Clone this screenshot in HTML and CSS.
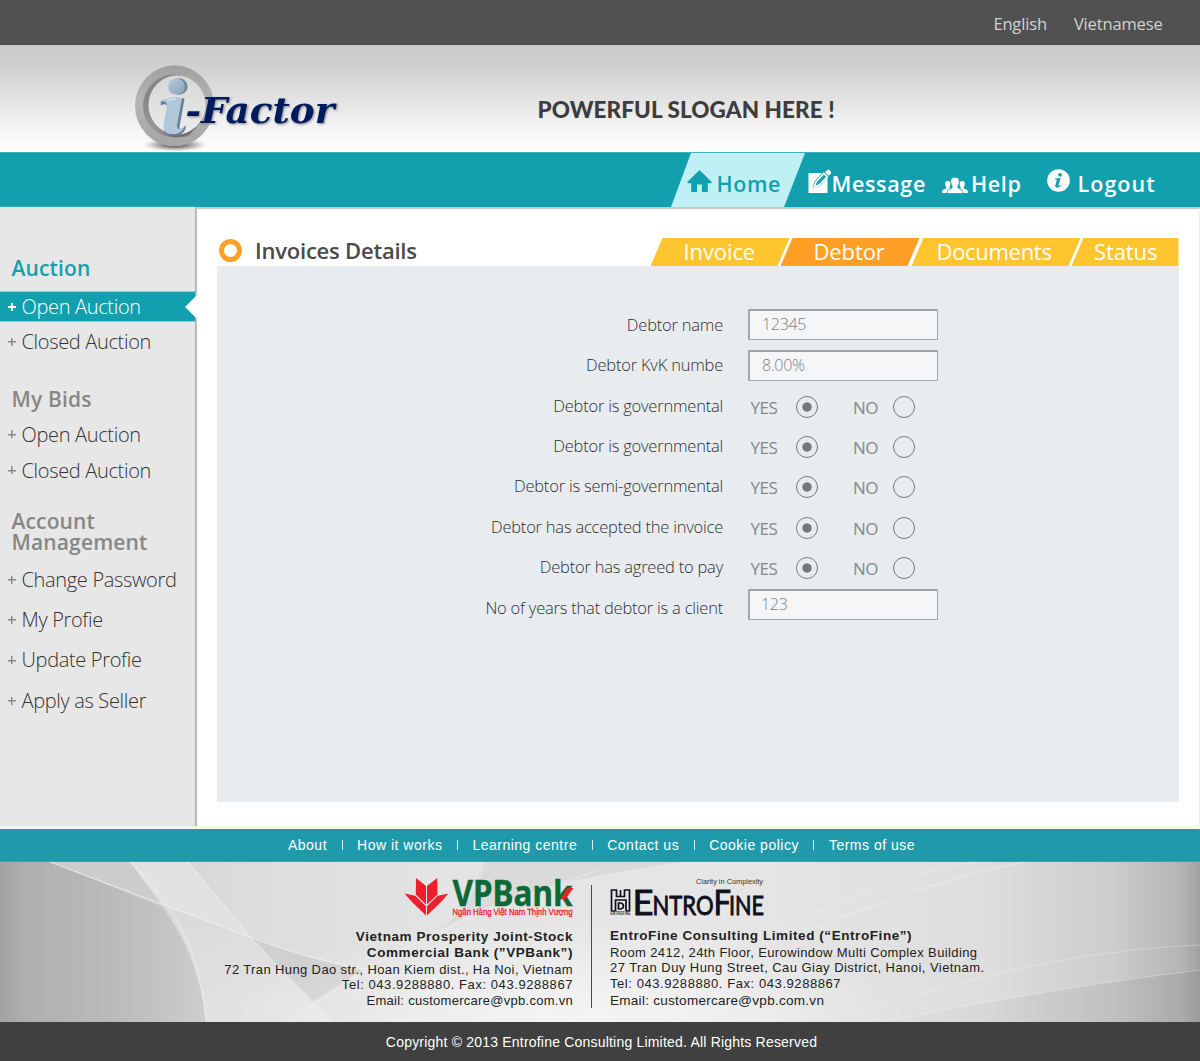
FILE: index.html
```
<!DOCTYPE html>
<html lang="en">
<head>
<meta charset="utf-8">
<title>i-Factor – Invoices Details</title>
<link rel="stylesheet" href="styles.css">
</head>
<body>
<div class="page">
  <div class="topbar">
    <a>English</a>
    <a>Vietnamese</a>
  </div>

  <header class="masthead">
    <svg class="logo" width="215" height="92" viewBox="130 60 215 92" role="img" aria-label="i-Factor">
      <defs>
        <linearGradient id="ring" x1="0" y1="0" x2="0" y2="1">
          <stop offset="0" stop-color="#a0a0a0"/><stop offset=".45" stop-color="#b4b4b4"/><stop offset="1" stop-color="#a6a6a6"/>
        </linearGradient>
        <linearGradient id="inner" x1="0" y1="0" x2="1" y2="1">
          <stop offset="0" stop-color="#7c7c7c"/><stop offset=".5" stop-color="#989898"/><stop offset="1" stop-color="#6f6f6f"/>
        </linearGradient>
        <linearGradient id="hole" x1="0" y1="0" x2="0" y2="1">
          <stop offset="0" stop-color="#d6d6d6"/><stop offset="1" stop-color="#ececec"/>
        </linearGradient>
        <linearGradient id="ball" x1="0" y1="0" x2="1" y2="1">
          <stop offset="0" stop-color="#b9cbdf"/><stop offset="1" stop-color="#8aa0b8"/>
        </linearGradient>
        <radialGradient id="ground"><stop offset="0" stop-color="#222"/><stop offset=".55" stop-color="#777" stop-opacity=".6"/><stop offset="1" stop-color="#999" stop-opacity="0"/></radialGradient>
      </defs>
      <ellipse cx="175" cy="145" rx="32" ry="6.500" fill="url(#ground)"/>
      <ellipse cx="174.500" cy="105.800" rx="39.500" ry="40.500" fill="url(#ring)"/>
      <ellipse cx="174" cy="106" rx="31" ry="31.500" fill="url(#inner)"/>
      <ellipse cx="177" cy="105" rx="28.500" ry="29.500" fill="url(#hole)"/>
      <path d="M158 130c10 8 28 7 37-3l-5 8c-8 4-20 3-30-4z" fill="#555" opacity=".5"/>
      <ellipse cx="179" cy="86.500" rx="8.600" ry="8.300" fill="#71869c"/>
      <ellipse cx="176.500" cy="86.500" rx="8.400" ry="8" fill="url(#ball)"/>
      <path d="M161 101.500c6-4 16-4.500 23.500-3l-5 28c0 4 3 3 6.500-1.500 0 7-5 11-13 10.500-9-.5-10-5-8.500-12l3-16c0-4-4-4-7-2z" fill="#697f97"/>
      <path d="M158.500 102c5-4 16-5.500 23.500-4l-5 27.500c-.5 4.500 4 4 7.500.5-1.500 5-5 8.500-12.500 8-8-.5-9.500-5-8-12l3-16c0-4.500-3.500-5.500-8.500-4z" fill="#b3c7da"/>
      <path d="M167 100.500c3-1 6-1.500 9-1.500" fill="none" stroke="#d3e0ec" stroke-width="1.500"/>
      <text class="logo-name" x="185.500" y="122.700" textLength="149" lengthAdjust="spacingAndGlyphs">-Factor</text>
    </svg>
    <p class="slogan">POWERFUL SLOGAN HERE !</p>
  </header>

  <nav class="mainnav">
    <a class="nav-home">
      <svg width="25" height="22" viewBox="0 0 25 22"><path d="M12.500 0 25 12.200 23.800 13.300H20.800V22H15V14.500H10V22H4.200V13.300H1.200L0 12.200z" fill="#12a0af"/></svg>
      <span>Home</span>
    </a>
    <a class="nav-message">
      <svg width="24" height="24" viewBox="0 0 24 24"><path d="M.5 4H14L6.500 12.500 4.500 19.500 12 16.800 19.500 8.800V24H.5z" fill="#fff"/><path d="M15.800 4.400 19.300 7.900 11 16 6.300 18 8 13z" fill="none" stroke="#fff" stroke-width="1.600"/><path d="M17 3.200 19.300 1q1-.8 2 .1l1.500 1.500q.9 1 0 2L20.600 6.800z" fill="#fff"/></svg>
      <span>Message</span>
    </a>
    <a class="nav-help">
      <svg width="26" height="17" viewBox="0 0 26 17" fill="#fff"><path d="M5.800 4c2.200 0 3 1.700 2.600 3.800-.3 1.500-.9 2-1 2.900 0 .8.8 1 1.700 1.400-2 .9-2.700 2-2.900 3.900H0c0-3 .8-3.300 3-4 1-.3 1.400-.6 1.300-1.400-.1-.8-.8-1.400-1-2.800C2.900 5.600 3.700 4 5.800 4z"/><path d="M20.200 4c-2.200 0-3 1.700-2.600 3.800.3 1.500.9 2 1 2.900 0 .8-.8 1-1.700 1.400 2 .9 2.700 2 2.900 3.900H26c0-3-.8-3.300-3-4-1-.3-1.400-.6-1.300-1.400.1-.8.8-1.400 1-2.800.4-2.200-.4-3.800-2.500-3.800z"/><path d="M13 .2c3.400 0 4.700 2.200 4.200 5.300-.2 1.800-1.300 2.900-1.400 4.200-.1 1.200.6 1.600 1.800 2 2.400.9 3.200 1.300 3.200 4.800H5.200c0-3.500.8-3.900 3.200-4.800 1.200-.4 1.900-.8 1.800-2-.1-1.300-1.200-2.400-1.400-4.200-.5-3.100.8-5.300 4.200-5.300z" stroke="#12a0af" stroke-width=".8"/></svg>
      <span>Help</span>
    </a>
    <a class="nav-logout">
      <svg width="23" height="23" viewBox="0 0 23 23"><circle cx="11.500" cy="11.500" r="11.300" fill="#fff"/><circle cx="13" cy="5.800" r="1.900" fill="#12a0af"/><path d="M8 9.600 13.600 9l-2 7.200c-.2 1 .7.800 2.200-.5l.4.500c-1.500 1.800-3 2.600-4.500 2.400-1.400-.2-1.700-1.200-1.300-2.600l1.400-4.700c.2-.8-.5-.9-1.800-.9z" fill="#12a0af"/></svg>
      <span>Logout</span>
    </a>
  </nav>

  <div class="columns">
    <aside class="sidebar">
      <h2 class="current">Auction</h2>
      <a class="active">Open Auction</a>
      <a>Closed Auction</a>
      <h2 class="bids">My Bids</h2>
      <a class="short">Open Auction</a>
      <a class="short">Closed Auction</a>
      <h2 class="account">Account<br>Management</h2>
      <a>Change Password</a>
      <a>My Profie</a>
      <a>Update Profie</a>
      <a>Apply as Seller</a>
    </aside>

    <main class="content">
      <div class="heading">
        <i class="bullet"></i>
        <h1>Invoices Details</h1>
        <div class="tabs">
          <a class="tab t1">Invoice</a>
          <a class="tab t2">Debtor</a>
          <a class="tab t3">Documents</a>
          <a class="tab t4">Status</a>
        </div>
      </div>
      <form class="panel">
        <div class="row"><label>Debtor name</label><div class="field"><span class="value">12345</span></div></div>
        <div class="row"><label>Debtor KvK numbe</label><div class="field"><span class="value">8.00%</span></div></div>
        <div class="row"><label>Debtor is governmental</label><div class="opts"><span>YES</span><i class="radio on"></i><span>NO</span><i class="radio"></i></div></div>
        <div class="row"><label>Debtor is governmental</label><div class="opts"><span>YES</span><i class="radio on"></i><span>NO</span><i class="radio"></i></div></div>
        <div class="row"><label>Debtor is semi-governmental</label><div class="opts"><span>YES</span><i class="radio on"></i><span>NO</span><i class="radio"></i></div></div>
        <div class="row"><label>Debtor has accepted the invoice</label><div class="opts"><span>YES</span><i class="radio on"></i><span>NO</span><i class="radio"></i></div></div>
        <div class="row"><label>Debtor has agreed to pay</label><div class="opts"><span>YES</span><i class="radio on"></i><span>NO</span><i class="radio"></i></div></div>
        <div class="row last"><label>No of years that debtor is a client</label><div class="field"><span class="value">123</span></div></div>
      </form>
    </main>
  </div>

  <nav class="footnav">
    <a>About</a><i></i><a>How it works</a><i></i><a>Learning centre</a><i></i><a>Contact us</a><i></i><a>Cookie policy</a><i></i><a>Terms of use</a>
  </nav>

  <footer class="partners">
    <svg class="backdrop" width="1200" height="160" viewBox="0 0 1200 160">
      <defs>
        <linearGradient id="bg" x1="0" y1="0" x2="1" y2="0">
          <stop offset="0" stop-color="#c4c4c4"/><stop offset=".2" stop-color="#dcdcdc"/><stop offset=".35" stop-color="#e3e3e3"/><stop offset=".6" stop-color="#e6e6e6"/><stop offset=".82" stop-color="#dedede"/><stop offset=".93" stop-color="#cccccc"/><stop offset=".985" stop-color="#b4b4b4"/><stop offset="1" stop-color="#a0a0a0"/>
        </linearGradient>
        <linearGradient id="dk" x1="0" y1="0" x2="1" y2="0"><stop offset="0" stop-color="#a2a2a2"/><stop offset=".12" stop-color="#afafaf"/><stop offset=".6" stop-color="#bcbcbc"/><stop offset="1" stop-color="#cdcdcd"/></linearGradient>
        <radialGradient id="lift" cx=".5" cy="1" r=".5" gradientTransform="translate(0 -.3) scale(1 1.300)"><stop offset="0" stop-color="#fff" stop-opacity=".6"/><stop offset=".4" stop-color="#fff" stop-opacity=".4"/><stop offset="1" stop-color="#fff" stop-opacity="0"/></radialGradient>
        <linearGradient id="side" x1="0" y1="0" x2="1" y2="0"><stop offset="0" stop-color="#8a8a8a" stop-opacity="0"/><stop offset="1" stop-color="#8a8a8a" stop-opacity=".25"/></linearGradient>
        <linearGradient id="mid" x1="0" y1="0" x2="1" y2="1"><stop offset="0" stop-color="#d2d2d2"/><stop offset="1" stop-color="#e6e6e6"/></linearGradient>
      </defs>
      <rect width="1200" height="160" fill="url(#bg)"/>
      <path d="M0 0H50L162 44Q200 95 206 160H0z" fill="url(#dk)"/>
      <path d="M50 0 250 75 332 160H206Q200 95 162 44z" fill="url(#mid)"/>
      <path d="M50 0H130L162 43z" fill="#cccccc"/>
      <path d="M130 0H188L250 75 162 43z" fill="#e2e2e2"/>
      <path d="M250 75Q310 98 362 108L312 140z" fill="#d0d0d0"/>
      <path d="M485 0H680Q500 25 430 75 475 45 485 0z" fill="#dadada"/>
      <rect x="230" width="680" height="160" fill="url(#lift)"/>
      <path d="M880 160Q1040 128 1200 108V160z" fill="url(#side)"/>
      <g fill="none" stroke="#f4f4f4" stroke-width="1.200">
        <path d="M50 0 250 75Q310 98 375 109" opacity=".6"/><path d="M130 0Q200 65 206 160M188 0 250 75 333 160" opacity=".5"/>
        <path d="M290 160 350 118Q440 60 600 8" opacity=".5"/><path d="M404 160Q430 115 480 95" opacity=".5"/>
        <path d="M780 68Q880 15 975 0M815 66Q940 15 1025 0" opacity=".45"/>
        <path d="M870 148Q1040 90 1200 83" opacity=".35"/><path d="M890 158Q1040 128 1200 108" opacity=".35"/>
      </g>
    </svg>

    <section class="partner vpbank">
      <svg class="brand" width="175" height="42" viewBox="400 875 175 42" role="img" aria-label="VPBank">
        <g fill="#ec1f2b">
          <path d="M416 878 426 886V904.500L415.800 894.500z"/><path d="M437.300 878 427 886V904.500L437.500 894.500z"/>
          <path d="M404.500 893.500 415.300 895.800 426 906.200V915.500L412.500 902.500z"/><path d="M448.500 893.500 437.800 895.800 427 906.200V915.500L440.500 902.500z"/>
        </g>
        <text class="vp" x="452.500" y="905.500" textLength="120" lengthAdjust="spacingAndGlyphs">VPBank</text>
        <path d="M560.500 898.500 567.500 888H573.500L564.500 900.500z" fill="#ec1f2b"/>
        <text class="vp-sub" x="452.500" y="915" textLength="120" lengthAdjust="spacingAndGlyphs">Ngân Hàng Việt Nam Thịnh Vượng</text>
      </svg>
      <p class="name">Vietnam Prosperity Joint-Stock<br>Commercial Bank (”VPBank”)</p>
      <p>72 Tran Hung Dao str., Hoan Kiem dist., Ha Noi, Vietnam</p>
      <p class="tel">Tel: 043.9288880. Fax: 043.9288867</p>
      <p class="mail">Email: customercare@vpb.com.vn</p>
    </section>
    <i class="divider"></i>
    <section class="partner entrofine">
      <svg class="brand" width="156" height="42" viewBox="609 875 156 42" role="img" aria-label="EntroFine">
        <text class="motto" x="696" y="884.300" textLength="67" lengthAdjust="spacingAndGlyphs">Clarity in Complexity</text>
        <g fill="none" stroke="#10101c" stroke-width="1.700">
          <path d="M611.500 911V890H616.500V896.500H624.500V890H629.500V911M615.500 911V900H626V911M620.500 890V896M611.500 911H615.500M626 911H629.500"/>
          <path d="M618.500 903V909H620.500Q623.500 908.500 623.500 906T620.500 903z"/>
        </g>
        <text class="micro" x="610.500" y="915" textLength="20" lengthAdjust="spacingAndGlyphs">ENTROFINE</text>
        <g class="ef">
          <text class="big" x="632.500" y="914.500" textLength="21" lengthAdjust="spacingAndGlyphs">E</text>
          <text x="652.500" y="914.500" textLength="61" lengthAdjust="spacingAndGlyphs">NTRO</text>
          <text class="big" x="713.500" y="914.500" textLength="17.500" lengthAdjust="spacingAndGlyphs">F</text>
          <text x="729" y="914.500" textLength="35" lengthAdjust="spacingAndGlyphs">INE</text>
        </g>
      </svg>
      <p class="name">EntroFine Consulting Limited (“EntroFine”)</p>
      <p>Room 2412, 24th Floor, Eurowindow Multi Complex Building</p>
      <p class="street">27 Tran Duy Hung Street, Cau Giay District, Hanoi, Vietnam.</p>
      <p class="tel">Tel: 043.9288880. Fax: 043.9288867</p>
      <p class="mail">Email: customercare@vpb.com.vn</p>
    </section>
  </footer>

  <div class="copyright">Copyright © 2013 Entrofine Consulting Limited. All Rights Reserved</div>
</div>
</body>
</html>
```

FILE: styles.css
```
* { box-sizing: border-box; }
body, h1, h2, p { margin: 0; }
body { background: #fff; font-family: "Open Sans", "Noto Sans", sans-serif; }
svg { display: block; flex: none; overflow: visible; }
.page { width: 1200px; height: 1061px; display: flex; flex-direction: column; overflow: hidden; }

/* top language bar */
.topbar { height: 45px; background: linear-gradient(#515151 95%, #4a4a4a); display: flex; justify-content: flex-end; gap: 27px; padding-right: 37.500px; }
.topbar a { font-size: 16.500px; line-height: 47px; color: #d2d2d2; letter-spacing: -.15px; }

/* masthead */
.masthead { height: 107px; background: linear-gradient(#cbcbcb 8%, #d4d4d4 28%, #ececec 65%, #fdfdfd 96%); display: flex; padding-left: 130px; }
.logo { margin-top: 15px; }
.logo-name { font: italic 700 34.500px "DejaVu Serif", serif; fill: #001c5e; filter: drop-shadow(1px 1.500px 1px #85858f); }
.slogan { margin-left: 192.500px; font: 900 22.500px/129px Lato, sans-serif; color: #3d3d3d; letter-spacing: .08px; white-space: nowrap; }

/* main navigation */
.mainnav { height: 55px; flex: none; background: #12a0af; border-top: 1px solid #3cb1bd; display: flex; padding-left: 671px; }
.mainnav a { display: flex; color: #fff; font-size: 21.500px; font-weight: 600; line-height: 61px; letter-spacing: .65px; }
.nav-home { width: 134px; background: #bff1f4; clip-path: polygon(20px 0, 100% 0, 113px 100%, 0 100%); padding-left: 16px; }
.mainnav .nav-home { color: #12a0af; letter-spacing: .6px; }
.nav-home svg { margin: 17px 4.500px 0 0; }
.nav-message { width: 137px; padding-left: 2.500px; }
.nav-message svg { margin-top: 16px; }
.nav-help { width: 105px; }
.nav-help svg { margin: 24px 3px 0 0; }
.nav-logout svg { margin: 16px 7.500px 0 0; }
.mainnav .nav-logout { letter-spacing: 1.050px; }

/* two columns */
.columns { height: 622px; display: flex; background: #fff; border-bottom: 3px solid #f5f7f1; }
.sidebar { width: 196px; background: #e7e7e7; border-right: 1px solid #adadad; padding-top: 45px; box-shadow: 1px 0 1px #c9c9c9; z-index: 1; }
.sidebar h2 { font-size: 21px; line-height: 32px; font-weight: 600; color: #878787; padding-left: 11.500px; letter-spacing: .14px; }
.sidebar .current { color: #12a0af; margin-bottom: 7px; }
.sidebar .bids { margin-top: 21px; margin-bottom: 2px; }
.sidebar .account { margin-top: 21.500px; line-height: 21px; margin-bottom: 7px; }
.sidebar a { display: flex; height: 40.300px; line-height: 40px; padding-left: 8px; font-size: 20px; font-weight: 300; color: #333; letter-spacing: -.33px; white-space: nowrap; }
.sidebar a::before { content: ""; width: 8px; height: 8px; margin: 16px 5.500px 0 0; background: linear-gradient(#8a8a8a, #8a8a8a) 50% 50% / 100% 1.500px no-repeat, linear-gradient(#8a8a8a, #8a8a8a) 50% 50% / 1.500px 100% no-repeat; }
.sidebar .short { height: 36px; line-height: 36px; }
.sidebar .short::before { margin-top: 13px; }
.sidebar .active { position: relative; width: 195px; height: 31px; line-height: 29px; color: #fff; background: #12a0af; border-top: 1px solid #8bd0d7; border-bottom: 1px solid #8bd0d7; }
.sidebar .active::before { margin-top: 11px; background: linear-gradient(#fff, #fff) 50% 50% / 100% 2px no-repeat, linear-gradient(#fff, #fff) 50% 50% / 2px 100% no-repeat; }
.sidebar .active::after { content: ""; position: absolute; right: -3px; top: 3px; width: 13px; height: 24px; background: #fff; clip-path: polygon(100% 0, 78% 8%, 0 50%, 78% 92%, 100% 100%); }

/* page heading and tabs */
.content { width: 1004px; padding: 29px 21px 0; border-top: 2px solid #c6c8c9; border-right: 1px solid #eee; }
.heading { display: flex; height: 28px; align-items: center; margin-right: -1px; }
.bullet { width: 23px; height: 23px; border: 5.500px solid #ffa126; border-radius: 50%; margin: -4px 0 0 1.500px; flex: none; }
.heading h1 { width: 409px; flex: none; padding-left: 13.500px; margin-top: -4px; font-size: 22px; line-height: 25px; font-weight: 600; color: #4a4a4a; letter-spacing: -.22px; }
.tabs { display: flex; height: 28px; }
.tab { height: 28px; line-height: 27px; color: #fff; background: #ffc52e; font-size: 22px; letter-spacing: -.1px; margin-left: -9px; flex: none; }
.t1 { width: 139px; padding-left: 33px; clip-path: polygon(12px 0, 100% 0, 127px 100%, 0 100%); margin-left: 0; }
.t2 { width: 139px; padding-left: 33px; background: #ff9f26; clip-path: polygon(12px 0, 100% 0, 127px 100%, 0 100%); }
.t3 { width: 169px; padding-left: 25px; margin-left: -8px; letter-spacing: -.3px; clip-path: polygon(12px 0, 100% 0, 157px 100%, 0 100%); }
.t4 { width: 107px; padding-left: 22.500px; clip-path: polygon(12px 0, 100% 0, 100% 100%, 0 100%); }

/* debtor form */
.panel { width: 962px; height: 536px; background: #e8ecef; padding-top: 36.800px; }
.row { display: grid; grid-template-columns: 506px 1fr; column-gap: 25px; height: 40.400px; align-items: center; }
.row label { text-align: right; font-size: 16.500px; line-height: 40px; font-weight: 300; color: #2e3133; letter-spacing: -.22px; padding-top: 2px; }
.field { width: 190px; height: 31px; border: 1px solid #a4a7aa; border-top: 2px solid #a0a3a6; border-left-width: 2px; border-radius: 1px; background: #f5f6f8; padding-left: 12px; display: flex; margin-top: 2px; }
.value { font-size: 16px; line-height: 27px; font-weight: 300; color: #7d7d7d; letter-spacing: -.3px; }
.last .field { margin-top: -5px; }
.last .value { margin-left: -1px; }
.opts { display: grid; grid-template-columns: 45.500px 57px 40px 22px; align-items: center; padding-left: 2.500px; padding-top: 6px; }
.opts span { font-size: 17px; line-height: 24px; color: #85888b; letter-spacing: -.5px; }
.radio { width: 22px; height: 22px; border: 1px solid #777a7c; border-radius: 50%; margin-top: -2px; }
.radio.on { background: radial-gradient(circle, #77787a 4.300px, transparent 5px); }

/* footer links */
.footnav { height: 33px; flex: none; background: #1f9aaa; border-bottom: 1px solid #4b9ba2; display: flex; justify-content: center; align-items: center; gap: 14.500px; padding: 0 0 0 3px; font: 14px/32px "Liberation Sans", sans-serif; letter-spacing: .5px; color: #fff; }
.footnav i { width: 1px; height: 10px; background: #d9eff1; margin-top: -1px; }

/* partner details */
.partners { position: relative; height: 160px; flex: none; display: grid; grid-template-columns: 573px 36px 1fr; background: #e0e0e0; font: 13px/15.500px "Liberation Sans", sans-serif; letter-spacing: .38px; color: #222; }
.backdrop { position: absolute; left: 0; top: 0; z-index: 0; }
.partner, .divider { position: relative; }
.brand { margin-top: 13px; margin-bottom: 12px; }
.vpbank { text-align: right; }
.vpbank .brand { margin-left: 400px; }
.partner .name { font-size: 13.500px; font-weight: 700; line-height: 16px; letter-spacing: .57px; margin-bottom: .5px; }
.partner .tel { letter-spacing: .57px; line-height: 16px; }
.vpbank .mail { letter-spacing: .28px; }
.entrofine .brand { margin-bottom: 11px; }
.entrofine p { margin-left: 1px; }
.entrofine .street { letter-spacing: .45px; }
.entrofine .mail { font-size: 13.500px; line-height: 17px; letter-spacing: .28px; }
.divider { width: 1px; height: 123px; background: #4a4a4a; margin: 23px 0 0 18px; }
.vp { font: 700 35.500px "Noto Sans", sans-serif; fill: #0d6a37; stroke: #0d6a37; stroke-width: .4px; letter-spacing: 0; }
.vp-sub { font: 8.500px "Liberation Sans", sans-serif; fill: #ec1f2b; stroke: #ec1f2b; stroke-width: .3px; letter-spacing: 0; }
.motto { font: 8px "Liberation Sans", sans-serif; fill: #333; letter-spacing: 0; }
.micro { font: 700 4.500px "Liberation Sans", sans-serif; fill: #333; letter-spacing: 0; }
.ef { font: 26.500px Lato, sans-serif; fill: #10101c; stroke: #10101c; stroke-width: .9px; letter-spacing: 0; }
.ef .big { font-size: 35px; }

.copyright { height: 39px; background: #404040; color: #fff; text-align: center; font: 14px/41px "Liberation Sans", sans-serif; letter-spacing: .2px; padding-left: 3px; }
```
